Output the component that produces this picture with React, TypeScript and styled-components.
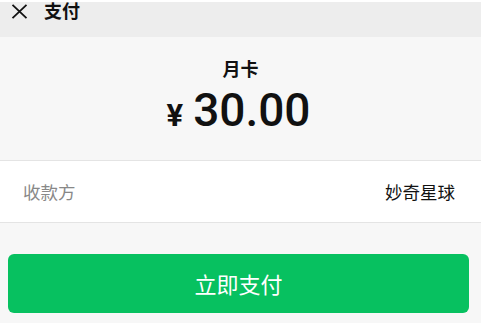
import React from 'react';
import styled, { createGlobalStyle } from 'styled-components';

const GlobalStyle = createGlobalStyle`
  html, body {
    margin: 0;
    padding: 0;
    background: #ffffff;
  }
  body {
    font-family: "Noto Sans CJK SC", "Noto Sans", Roboto, sans-serif;
  }
`;

const Page = styled.div`
  width: 481px;
  height: 323px;
  padding-top: 2px;
  box-sizing: border-box;
  display: flex;
  flex-direction: column;
  background: #ffffff;
  overflow: hidden;
`;

const Screen = styled.div`
  flex: 1;
  display: flex;
  flex-direction: column;
  background: #f7f7f7;
`;

const Header = styled.header`
  height: 35px;
  display: flex;
  align-items: flex-start;
  gap: 16px;
  padding-left: 10px;
  background: #ededed;
  color: #111111;
`;

const CloseButton = styled.button`
  display: flex;
  align-items: center;
  justify-content: center;
  width: 18px;
  height: 16px;
  margin-top: 1px;
  padding: 0;
  border: none;
  background: none;
  color: #111111;
`;

const Title = styled.h1`
  margin: 0;
  margin-top: -4px;
  font-size: 18px;
  line-height: 24px;
  font-weight: 700;
`;

const Summary = styled.section`
  height: 123px;
  display: flex;
  flex-direction: column;
  align-items: center;
  border-bottom: 1px solid #e4e4e4;
`;

const Product = styled.div`
  margin-top: 19px;
  font-size: 18px;
  line-height: 24px;
  font-weight: 700;
  color: #111111;
`;

const Amount = styled.div`
  display: flex;
  align-items: baseline;
  gap: 10px;
  margin-top: 3px;
  margin-right: 4px;
  color: #111111;
`;

const Currency = styled.span`
  font-family: Roboto, "Liberation Sans", sans-serif;
  font-size: 31px;
  font-weight: 700;
  line-height: 1;
`;

const Value = styled.span`
  font-family: Roboto, "Liberation Sans", sans-serif;
  font-size: 46px;
  font-weight: 500;
  line-height: 54px;
`;

const InfoRow = styled.div`
  height: 61px;
  display: flex;
  align-items: center;
  justify-content: space-between;
  padding: 0 26px 0 23px;
  background: #ffffff;
  border-bottom: 1px solid #e4e4e4;
  font-size: 17.5px;
`;

const Label = styled.span`
  color: #888888;
`;

const Payee = styled.span`
  color: #111111;
`;

const Footer = styled.div`
  padding: 31px 12px 0 8px;
`;

const PayButton = styled.button`
  width: 100%;
  height: 59px;
  padding-bottom: 2px;
  border: none;
  border-radius: 6px;
  background: #07c160;
  color: #ffffff;
  font-family: "Noto Sans CJK SC", "Noto Sans", sans-serif;
  font-size: 22px;
  cursor: pointer;
`;

const App: React.FC = () => {
  return (
    <>
      <GlobalStyle />
      <Page>
        <Screen>
          <Header>
            <CloseButton aria-label="关闭">
              <svg width="17" height="15" viewBox="0 0 17 15" fill="none">
                <path d="M1.5 0.8 L15.5 14.2 M15.5 0.8 L1.5 14.2" stroke="#111" strokeWidth="1.8" />
              </svg>
            </CloseButton>
            <Title>支付</Title>
          </Header>
          <Summary>
            <Product>月卡</Product>
            <Amount>
              <Currency>¥</Currency>
              <Value>30.00</Value>
            </Amount>
          </Summary>
          <InfoRow>
            <Label>收款方</Label>
            <Payee>妙奇星球</Payee>
          </InfoRow>
          <Footer>
            <PayButton>立即支付</PayButton>
          </Footer>
        </Screen>
      </Page>
    </>
  );
};

export default App;
